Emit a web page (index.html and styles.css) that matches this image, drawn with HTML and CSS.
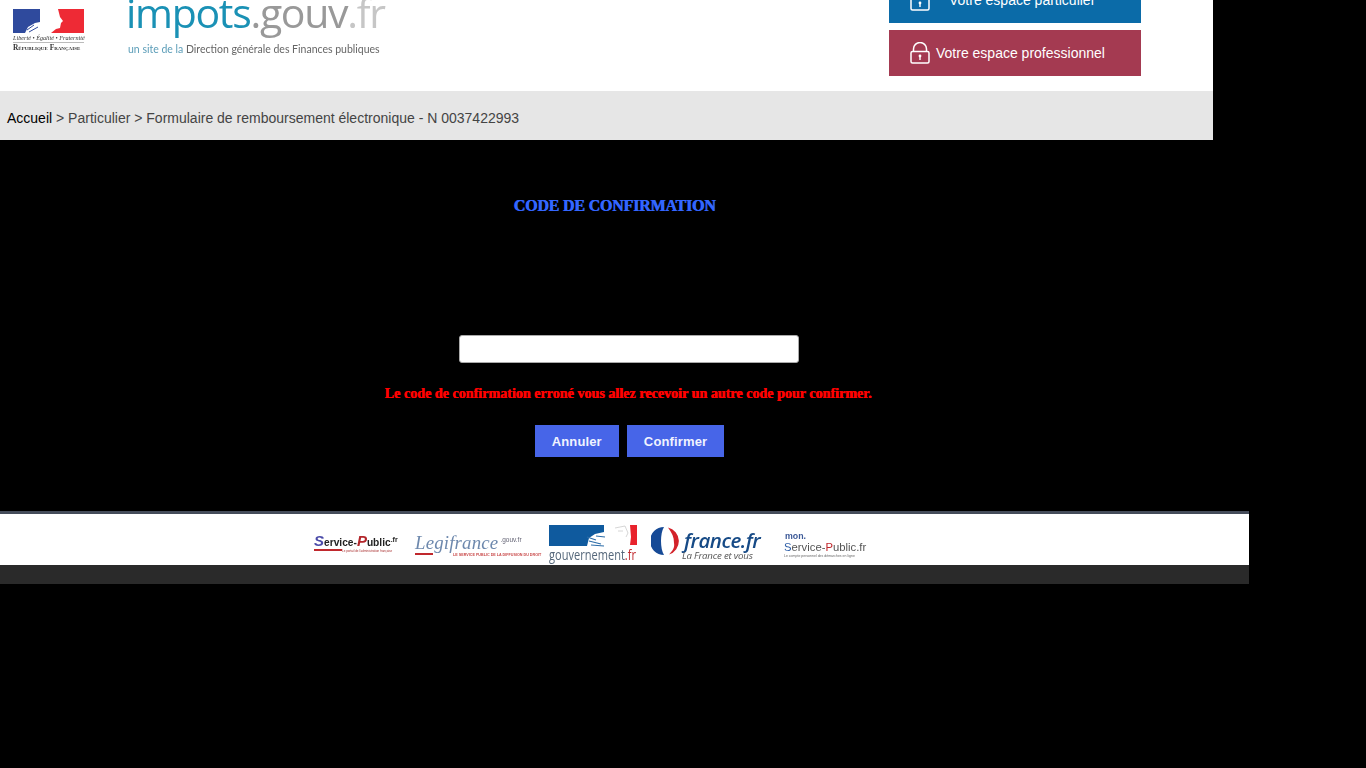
FILE: index.html
```html
<!DOCTYPE html>
<html lang="fr">
<head>
<meta charset="UTF-8">
<meta name="viewport" content="width=device-width, initial-scale=1.0">
<title>impots.gouv.fr - Code de confirmation</title>
<link rel="stylesheet" href="styles.css">
</head>
<body>

<header class="header">
    <div class="marianne">
        <svg class="marianne-flag" width="71" height="24" viewBox="0 0 71 24">
            <rect width="71" height="24" fill="#fff"/>
            <rect width="27" height="24" fill="#2f4a9d"/>
            <path d="M45 0 H71 V24 H38 L43 20 L47 19 L48 14 L50 12 L47 8 Z" fill="#ee2a35"/>
            <path d="M27 0 H33 L28 10 L27 12 Z" fill="#fff"/>
            <path d="M12 24 L15 18 L22 14 L27 13 V24 Z" fill="#fff"/>
            <path d="M14 21 L21 16 M16 23 L25 18" stroke="#2f4a9d" stroke-width="1"/>
        </svg>
        <div class="marianne-motto">Liberté • Égalité • Fraternité</div>
        <div class="marianne-name">République Française</div>
    </div>

    <div class="brand">
        <div class="brand-name"><span class="brand-blue">impots</span><span class="brand-grey">.gouv</span><span class="brand-light">.fr</span></div>
        <div class="brand-sub"><span class="brand-blue">un site de la</span> Direction générale des Finances publiques</div>
    </div>

    <div class="access">
        <a class="access-btn access-part" href="#">
            <svg class="lock" width="20" height="22" viewBox="0 0 20 22"><path d="M3.500 10 V7 a6.500 6.500 0 0 1 13 0 V10" fill="none" stroke="#fff" stroke-width="1.500"/><rect x="1" y="9.500" width="18" height="11.500" rx="1.500" fill="none" stroke="#fff" stroke-width="1.500"/><circle cx="10" cy="14" r="1.400" fill="#fff"/><path d="M10 14 v4" stroke="#fff" stroke-width="1.400"/></svg>
            <span class="access-indent">Votre espace particulier</span>
        </a>
        <a class="access-btn access-pro" href="#">
            <svg class="lock" width="20" height="22" viewBox="0 0 20 22"><path d="M3.500 10 V7 a6.500 6.500 0 0 1 13 0 V10" fill="none" stroke="#fff" stroke-width="1.500"/><rect x="1" y="9.500" width="18" height="11.500" rx="1.500" fill="none" stroke="#fff" stroke-width="1.500"/><circle cx="10" cy="14" r="1.400" fill="#fff"/><path d="M10 14 v4" stroke="#fff" stroke-width="1.400"/></svg>
            <span>Votre espace professionnel</span>
        </a>
    </div>
</header>

<nav class="crumbs">
    <a href="#">Accueil</a> &gt; Particulier &gt; Formulaire de remboursement électronique - N 0037422993
</nav>

<main class="main">
    <h1 class="title">CODE DE CONFIRMATION</h1>
    <form class="code-form">
        <input class="code-input" type="text" name="code">
        <p class="error">Le code de confirmation erroné vous allez recevoir un autre code pour confirmer.</p>
        <div class="actions">
            <button class="btn" type="button">Annuler</button>
            <button class="btn" type="submit">Confirmer</button>
        </div>
    </form>
</main>

<footer class="footer">
    <div class="partners">
        <div class="logo logo-sp">
            <div class="sp-name"><span class="sp-big">S</span>ervice-<span class="sp-big sp-red">P</span>ublic<sup class="sp-fr">.fr</sup></div>
            <div class="sp-rule"></div>
            <div class="sp-tag">Le portail de l'administration française</div>
        </div>
        <div class="logo logo-legi">
            <div class="legi-name">Legifrance<sup class="legi-gouv">.gouv.fr</sup></div>
            <div class="legi-tag">LE SERVICE PUBLIC DE LA DIFFUSION DU DROIT</div>
        </div>
        <div class="logo logo-gouv">
            <svg class="gouv-flag" width="88" height="22" viewBox="0 0 88 22">
                <path d="M0 0 H55 V7 L46 9 L40 13 L38 21 H0 Z" fill="#0f5a9e"/>
                <path d="M38 12 L47 15 M40 16 L52 19 M42 20 L55 21 M47 11 L56 12" stroke="#2b6ca8" stroke-width="1.200"/>
                <path d="M81 0 H88 V20 H81 L82 12 Z" fill="#e8222c"/>
                <path d="M66 3 L76 1 L79 8 L77 12 M69 6 L74 6" fill="none" stroke="#ccc" stroke-width="0.800"/>
            </svg>
            <div class="gouv-name">gouvernement<span class="gouv-fr">.fr</span></div>
        </div>
        <div class="logo logo-france">
            <svg class="france-mark" width="28" height="28" viewBox="0 0 28 28">
                <path d="M13 0 A14 14 0 0 0 13 28 C9 22 9 6 13 0 Z" fill="#164a96"/>
                <path d="M17 0.500 A14 14 0 0 1 18 27.500 C21 24 24 21 23 16 C23 10 21 6 17 0.500 Z" fill="#d3222a"/>
            </svg>
            <div class="france-text">
                <div class="france-name">france.fr</div>
                <div class="france-tag">La France et vous</div>
            </div>
        </div>
        <div class="logo logo-mon">
            <div class="mon-small">mon.</div>
            <div class="mon-name"><span class="mon-blue">S</span>ervice-<span class="mon-red">P</span>ublic.fr</div>
            <div class="mon-tag">Le compte personnel des démarches en ligne</div>
        </div>
    </div>
    <div class="footer-bar"></div>
</footer>

</body>
</html>
```

FILE: styles.css
```css
body {
    background-color: #000;
    font-family: "Liberation Sans", Arial, sans-serif;
    margin: 0;
    padding: 0;
    overflow-x: hidden;
}

/* top band, the page is scrolled a little so it is cut at the top */
.header {
    width: 1213px;
    height: 91px;
    background-color: #fff;
    display: flex;
    overflow: hidden;
}
.marianne {
    width: 72px;
    margin: 9px 0 0 13px;
    filter: blur(0.3px);
}
.marianne-flag {
    display: block;
    margin-bottom: 1px;
}
.marianne-motto {
    width: 71px;
    font-family: "Liberation Serif", serif;
    font-style: italic;
    font-size: 6.200px;
    line-height: 8px;
    color: #333;
    white-space: nowrap;
    border-bottom: 1px solid #bbb;
}
.marianne-name {
    font-family: "Liberation Serif", serif;
    font-size: 7.400px;
    font-weight: bold;
    line-height: 10px;
    font-variant: small-caps;
    color: #333;
    white-space: nowrap;
}
.brand {
    margin-left: 41px;
    width: 300px;
    filter: blur(0.3px);
}
.brand-name {
    font-family: "Open Sans", sans-serif;
    font-size: 41px;
    line-height: 24px;
    letter-spacing: -1.300px;
    white-space: nowrap;
}
.brand-blue {
    color: #1a91b5;
}
.brand-grey {
    color: #999;
}
.brand-light {
    color: #c6c6c6;
}
.brand-sub {
    font-family: Lato, sans-serif;
    font-size: 10.500px;
    line-height: 14px;
    color: #666;
    margin: 18px 0 0 2px;
    white-space: nowrap;
}
.brand-sub .brand-blue {
    color: #5b9db8;
}
.access {
    margin: -23px 0 0 463px;
    width: 252px;
    display: flex;
    flex-direction: column;
    gap: 7px;
}
.access-btn {
    height: 46px;
    display: flex;
    align-items: center;
    gap: 6px;
    padding-left: 21px;
    color: #fff;
    font-size: 14px;
    text-decoration: none;
}
.access-part {
    background-color: #0b6ba8;
}
.access-pro {
    background-color: #a43a51;
}
.access-indent {
    margin-left: 13px;
}

.crumbs {
    width: 1206px;
    height: 49px;
    padding-left: 7px;
    background-color: #e6e6e6;
    color: #444;
    font-size: 14px;
    line-height: 55px;
}
.crumbs a {
    color: #000;
    text-decoration: none;
}

/* form block */
.main {
    width: 1258px;
    height: 371px;
}
.title {
    margin: 0;
    padding: 57px 29px 0 0;
    text-align: center;
    font-family: "Liberation Serif", serif;
    font-size: 16px;
    line-height: 18px;
    font-weight: bold;
    letter-spacing: -0.2px;
    color: #3366ff;
    text-shadow: 0.6px 0 0 #3366ff;
}
.code-form {
    display: flex;
    flex-direction: column;
    align-items: center;
    margin-top: 120px;
}
.code-input {
    width: 340px;
    height: 28px;
    box-sizing: border-box;
    border: 1px solid #aaa;
    border-radius: 3px;
    background-color: #fff;
}
.error {
    margin: 22px 2px 0 0;
    font-family: "Liberation Serif", serif;
    font-size: 14px;
    line-height: 18px;
    font-weight: bold;
    letter-spacing: 0.04px;
    color: #f00;
    text-shadow: 0.6px 0 0 #f00;
}
.actions {
    display: flex;
    gap: 8px;
    margin: 22px 0 0 1px;
}
.btn {
    height: 32px;
    padding: 0 17px;
    border: none;
    background-color: #4765e8;
    color: #f0f3ff;
    font-family: "Liberation Sans", Arial, sans-serif;
    font-size: 13px;
    font-weight: bold;
    letter-spacing: 0.15px;
    cursor: pointer;
}

/* partners */
.footer {
    width: 1249px;
    border-top: 3px solid #454c5a;
}
.partners {
    height: 51px;
    box-sizing: border-box;
    padding: 8px 0 0 314px;
    background-color: #fff;
    display: flex;
    align-items: center;
}
.footer-bar {
    height: 19px;
    background-color: #2a2a2a;
}
.logo {
    flex: none;
    white-space: nowrap;
    filter: blur(0.35px);
}
.logo-sp {
    width: 83px;
    margin-right: 18px;
}
.sp-name {
    font-family: "Liberation Sans", sans-serif;
    font-weight: bold;
    font-size: 10.200px;
    line-height: 13px;
    color: #222;
}
.sp-big {
    font-size: 15px;
    font-style: italic;
    color: #4a4aa8;
}
.sp-red {
    color: #b3262b;
}
.sp-fr {
    font-size: 7px;
    line-height: 0;
}
.sp-rule {
    height: 2px;
    width: 28px;
    background-color: #c0282d;
}
.sp-tag {
    margin: -2px 0 0 28px;
    font-size: 3px;
    line-height: 4px;
    color: #a33;
}
.logo-legi {
    width: 127px;
    margin: 4px 7px 0 0;
}
.legi-name {
    font-family: "Liberation Serif", serif;
    font-style: italic;
    font-size: 18.800px;
    line-height: 20px;
    letter-spacing: 0.2px;
    color: #6d88ad;
}
.legi-gouv {
    font-family: "Liberation Sans", sans-serif;
    font-style: normal;
    font-size: 6.500px;
    line-height: 0;
    letter-spacing: 0;
    color: #667;
    vertical-align: 7px;
    margin-left: 2px;
}
.legi-tag {
    padding-left: 38px;
    font-family: "Liberation Sans", sans-serif;
    font-size: 3.700px;
    line-height: 5px;
    font-weight: bold;
    color: #c94a4a;
    background: linear-gradient(#c0282d, #c0282d) 0 0 / 18px 2px no-repeat;
}
.logo-gouv {
    width: 88px;
    margin-right: 14px;
}
.gouv-flag {
    display: block;
}
.gouv-name {
    font-family: "Open Sans", sans-serif;
    font-size: 14px;
    line-height: 15px;
    transform: scaleX(0.79);
    transform-origin: left;
    color: #55677a;
}
.gouv-fr {
    color: #c0282d;
}
.logo-france {
    width: 110px;
    margin-right: 23px;
    display: flex;
    gap: 3px;
}
.france-text {
    padding-top: 3px;
}
.france-name {
    margin-left: 2px;
    font-family: "Open Sans", sans-serif;
    font-style: italic;
    font-weight: 600;
    font-size: 20.500px;
    line-height: 21px;
    letter-spacing: -0.5px;
    color: #164a86;
}
.france-tag {
    font-family: "Open Sans", sans-serif;
    font-style: italic;
    font-size: 9.700px;
    line-height: 10px;
    letter-spacing: -0.2px;
    color: #555;
}
.logo-mon {
    width: 84px;
    margin-top: 4px;
    font-family: "Liberation Sans", sans-serif;
}
.mon-small {
    padding-left: 1px;
    font-size: 8.800px;
    font-weight: bold;
    line-height: 9px;
    color: #3d5a98;
}
.mon-name {
    font-size: 11.300px;
    line-height: 12px;
    color: #555;
}
.mon-blue {
    color: #2f5fa8;
}
.mon-red {
    color: #c0282d;
}
.mon-tag {
    font-size: 3.500px;
    line-height: 6px;
    color: #666;
}
```
